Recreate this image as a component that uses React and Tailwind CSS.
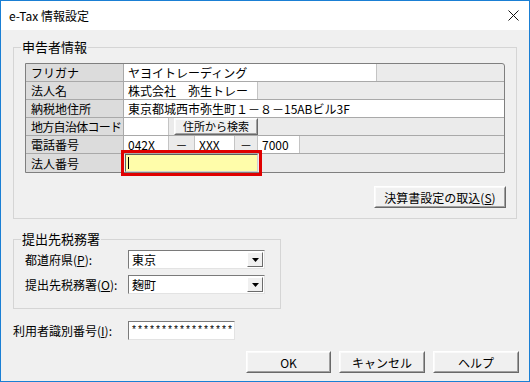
const jp = "font-['Noto_Sans_CJK_JP','Liberation_Sans',sans-serif]";

function RaisedButton({ children, className }) {
  return (
    <div className={"border border-t-white border-l-white border-r-[#696969] border-b-[#696969] bg-[#f0f0f0] " + className}>
      <div className="h-full border border-t-[#fafafa] border-l-[#fafafa] border-r-[#a0a0a0] border-b-[#a0a0a0] flex items-center justify-center">
        {children}
      </div>
    </div>
  );
}

function Combo({ value }) {
  return (
    <div className="w-[137px] h-[19px] bg-white border border-t-[#7a7a7a] border-l-[#7a7a7a] border-r-[#e3e3e3] border-b-[#e3e3e3] flex items-center">
      <span className="flex-1 pl-[3px] text-[12px] leading-[15px]">{value}</span>
      <div className="w-[16px] h-[15px] mr-[1px] border border-t-white border-l-white border-r-[#6b6b6b] border-b-[#6b6b6b] bg-[#f0f0f0] flex items-center justify-center">
        <svg width="7" height="4" viewBox="0 0 7 4">
          <path d="M0 0H7L3.5 4Z" fill="#000" />
        </svg>
      </div>
    </div>
  );
}

function Row({ label, children, last, tight }) {
  return (
    <div className={"flex h-[18px] " + (last ? "" : "border-b border-[#a9a9a9]")}>
      <div
        className={
          "w-[98px] shrink-0 bg-[#dcdcdc] border-r border-[#a9a9a9] pl-[5px] flex items-center whitespace-nowrap overflow-hidden text-[12px] leading-[15px] " +
          (tight ? "tracking-[-0.7px]" : "")
        }
      >
        {label}
      </div>
      <div className="flex-1 flex">{children}</div>
    </div>
  );
}

function Cell({ w, children }) {
  return (
    <div className={"bg-white border-r border-[#c4c4c4] pl-[4px] flex items-center whitespace-nowrap text-[12px] leading-[15px] " + w}>
      {children}
    </div>
  );
}

export default function App() {
  return (
    <div className={"w-[530px] h-[382px] border border-[#1a7fd4] bg-[#f0f0f0] text-black flex flex-col " + jp}>
      {/* Title bar */}
      <div className="h-[29px] bg-white flex items-center justify-between pl-[8px] pr-[10px]">
        <span className="text-[12px] leading-[16px]">e-Tax 情報設定</span>
        <svg width="11" height="11" viewBox="0 0 11 11">
          <path d="M0.5 0.5L10.5 10.5M10.5 0.5L0.5 10.5" stroke="#111" strokeWidth="1" />
        </svg>
      </div>

      {/* 申告者情報 */}
      <fieldset className="mt-[9px] ml-[12px] w-[504px] border border-[#d5d5d5] pb-[10px]">
        <legend className="ml-[7px] px-[1px] text-[13px] leading-[16px]">申告者情報</legend>
        <div className="mt-[8px] mx-[11px] border border-[#7f7f7f] rounded-tr-[3px] bg-[#ebebeb]">
          <Row label="フリガナ">
            <Cell w="w-[253px]">ヤヨイトレーディング</Cell>
          </Row>
          <Row label="法人名">
            <Cell w="w-[134px]">株式会社　弥生トレー</Cell>
          </Row>
          <Row label="納税地住所">
            <Cell w="flex-1 border-r-0">東京都城西市弥生町１－８－15ABビル3F</Cell>
          </Row>
          <Row label="地方自治体コード" tight>
            <Cell w="w-[45px]" />
            <div className="w-[5px]" />
            <RaisedButton className="w-[84px] h-[17px] text-[11px] leading-[13px]">住所から検索</RaisedButton>
          </Row>
          <Row label="電話番号">
            <Cell w="w-[45px]">042X</Cell>
            <div className="w-[26px] flex items-center justify-center text-[12px] border-r border-[#c4c4c4]">－</div>
            <Cell w="w-[40px]">XXX</Cell>
            <div className="w-[23px] flex items-center justify-center text-[12px] border-r border-[#c4c4c4]">－</div>
            <Cell w="w-[42px]">7000</Cell>
          </Row>
          <Row label="法人番号" last>
            <div className="relative ml-[1px] w-[133px] h-[18px]">
              <div className="h-full bg-[#fffdaa] border border-t-[#5e5e5e] border-l-[#5e5e5e] border-r-[#d0d0d0] border-b-[#d0d0d0] flex items-center pl-[2px]">
                <div className="w-[1px] h-[12px] bg-black" />
              </div>
              <div className="absolute -inset-[4px] border-[3px] border-[#e00000]" />
            </div>
          </Row>
        </div>
        <div className="flex justify-end mt-[13px] mr-[10px]">
          <RaisedButton className="w-[132px] h-[22px] text-[12px] leading-[15px]">
            <span>決算書設定の取込(<u>S</u>)</span>
          </RaisedButton>
        </div>
      </fieldset>

      {/* 提出先税務署 */}
      <fieldset className="mt-[12px] ml-[12px] w-[268px] border border-[#d5d5d5] pb-[14px]">
        <legend className="ml-[7px] px-[1px] text-[13px] leading-[16px]">提出先税務署</legend>
        <div className="mt-[3px] ml-[11px] flex flex-col gap-[6px]">
          <div className="flex items-center">
            <span className="w-[103px] text-[12px] leading-[15px]">都道府県(<u>P</u>):</span>
            <Combo value="東京" />
          </div>
          <div className="flex items-center">
            <span className="w-[103px] text-[12px] leading-[15px]">提出先税務署(<u>O</u>):</span>
            <Combo value="麹町" />
          </div>
        </div>
      </fieldset>

      {/* 利用者識別番号 */}
      <div className="mt-[12px] ml-[12px] flex items-center">
        <span className="w-[115px] text-[12px] leading-[15px]">利用者識別番号(<u>I</u>):</span>
        <div className="w-[107px] h-[19px] bg-white border border-t-[#7a7a7a] border-l-[#7a7a7a] border-r-[#e3e3e3] border-b-[#e3e3e3] flex items-center pl-[2px] text-[10px] leading-[12px] font-['Liberation_Mono',monospace]">
          *****************
        </div>
      </div>

      {/* Buttons */}
      <div className="mt-[11px] mr-[10px] flex justify-end gap-[8px]">
        <RaisedButton className="w-[85px] h-[22px] text-[12px] leading-[15px]">OK</RaisedButton>
        <RaisedButton className="w-[86px] h-[22px] text-[12px] leading-[15px]">キャンセル</RaisedButton>
        <RaisedButton className="w-[86px] h-[22px] text-[12px] leading-[15px]">ヘルプ</RaisedButton>
      </div>
    </div>
  );
}
